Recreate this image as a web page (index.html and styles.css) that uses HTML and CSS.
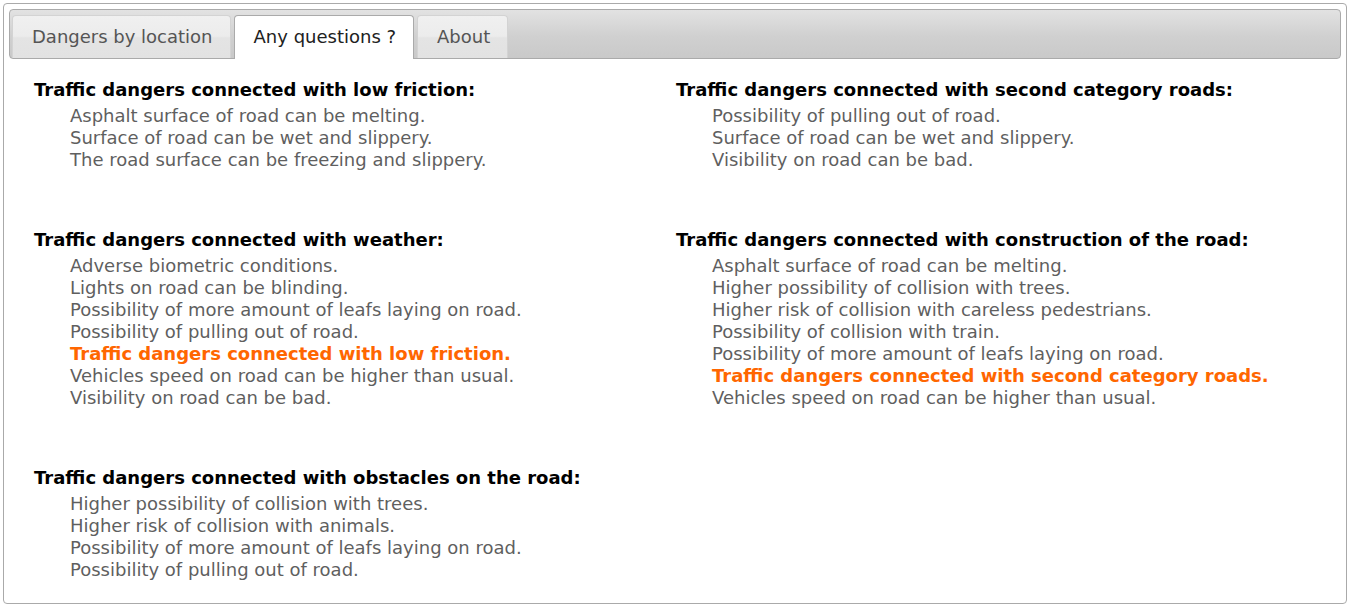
FILE: index.html
```html
<!DOCTYPE html>
<html>
<head>
<meta charset="utf-8">
<link rel="stylesheet" href="styles.css">
</head>
<body>
<div class="tabs">
  <ul class="nav">
    <li class="tab">Dangers by location</li>
    <li class="tab active">Any questions ?</li>
    <li class="tab">About</li>
  </ul>
  <div class="panel">
    <section class="group">
      <h3>Traffic dangers connected with low friction:</h3>
      <ul>
        <li>Asphalt surface of road can be melting.</li>
        <li>Surface of road can be wet and slippery.</li>
        <li>The road surface can be freezing and slippery.</li>
      </ul>
    </section>
    <section class="group">
      <h3>Traffic dangers connected with second category roads:</h3>
      <ul>
        <li>Possibility of pulling out of road.</li>
        <li>Surface of road can be wet and slippery.</li>
        <li>Visibility on road can be bad.</li>
      </ul>
    </section>
    <section class="group">
      <h3>Traffic dangers connected with weather:</h3>
      <ul>
        <li>Adverse biometric conditions.</li>
        <li>Lights on road can be blinding.</li>
        <li>Possibility of more amount of leafs laying on road.</li>
        <li>Possibility of pulling out of road.</li>
        <li class="link">Traffic dangers connected with low friction.</li>
        <li>Vehicles speed on road can be higher than usual.</li>
        <li>Visibility on road can be bad.</li>
      </ul>
    </section>
    <section class="group">
      <h3>Traffic dangers connected with construction of the road:</h3>
      <ul>
        <li>Asphalt surface of road can be melting.</li>
        <li>Higher possibility of collision with trees.</li>
        <li>Higher risk of collision with careless pedestrians.</li>
        <li>Possibility of collision with train.</li>
        <li>Possibility of more amount of leafs laying on road.</li>
        <li class="link">Traffic dangers connected with second category roads.</li>
        <li>Vehicles speed on road can be higher than usual.</li>
      </ul>
    </section>
    <section class="group">
      <h3>Traffic dangers connected with obstacles on the road:</h3>
      <ul>
        <li>Higher possibility of collision with trees.</li>
        <li>Higher risk of collision with animals.</li>
        <li>Possibility of more amount of leafs laying on road.</li>
        <li>Possibility of pulling out of road.</li>
      </ul>
    </section>
  </div>
</div>
</body>
</html>
```
FILE: styles.css
```css
html, body {
  margin: 0;
  padding: 0;
  background: #fff;
}
body {
  font-family: "DejaVu Sans", Verdana, sans-serif;
  font-size: 18px;
}
.tabs {
  margin: 3px 4px 0 3px;
  border: 1px solid #aaa;
  border-radius: 4px;
  padding: 5px;
  height: 601px;
  box-sizing: border-box;
  overflow: hidden;
}
.nav {
  list-style: none;
  margin: 0;
  padding: 4px 2px 0;
  display: flex;
  gap: 3px;
  border: 1px solid #aaa;
  border-radius: 4px;
  background: linear-gradient(to bottom, #e2e2e2 0%, #d0d0d0 55%, #c9c9c9 100%);
  height: 44px;
  align-items: flex-end;
}
.tab {
  box-sizing: border-box;
  height: 43px;
  padding: 0 17px 0 19px;
  line-height: 41px;
  border: 1px solid #d3d3d3;
  border-bottom: none;
  border-radius: 4px 4px 0 0;
  color: #555;
  background: linear-gradient(to bottom, #f0f0f0 0%, #ececec 48%, #e4e4e4 52%, #e2e2e2 100%);
}
.tab.active {
  height: 44px;
  margin-bottom: -1px;
  border-color: #aaa;
  background: #fff;
  color: #212121;
}
.panel {
  display: grid;
  grid-template-columns: 642px 642px;
  padding: 20px 0 0 25px;
  align-items: start;
}
.group {
  margin-bottom: 58px;
}
.group h3 {
  margin: 0;
  font-size: 18px;
  font-weight: bold;
  color: #000;
  line-height: 22px;
  margin-bottom: 4px;
}
.group ul {
  list-style: none;
  margin: 0;
  padding: 0 0 0 36px;
}
.group li {
  line-height: 22px;
  color: #5f5f5f;
}
.group li.link {
  color: #ff6600;
  font-weight: bold;
}
```
